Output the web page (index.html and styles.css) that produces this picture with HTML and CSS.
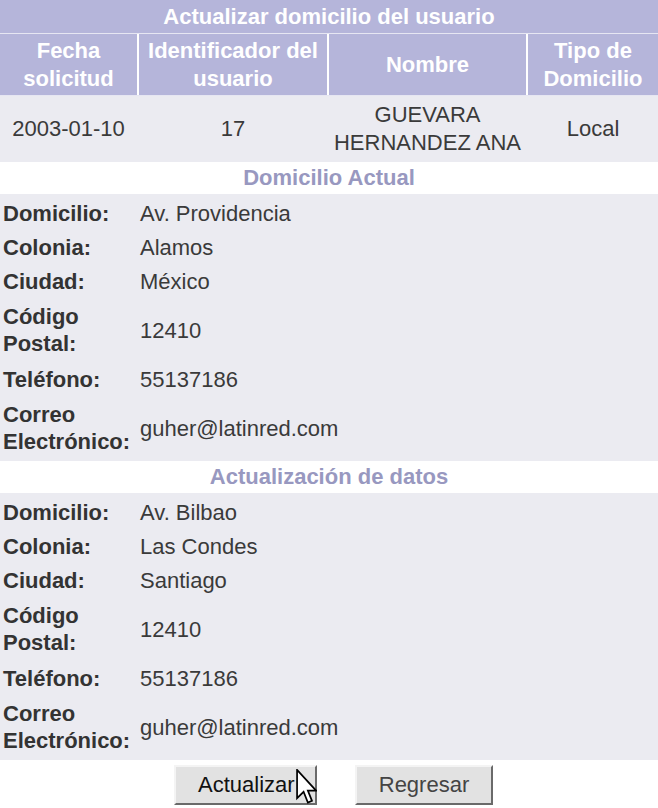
FILE: index.html
```html
<!DOCTYPE html>
<html lang="es">
<head>
    <meta charset="UTF-8">
    <meta name="viewport" content="width=device-width, initial-scale=1.0">
    <title>Actualizar domicilio del usuario</title>
    <link rel="stylesheet" href="styles.css">
</head>
<body>
    <div class="panel">
        <div class="title">Actualizar domicilio del usuario</div>
        <div class="cols head">
            <div>Fecha<br>solicitud</div>
            <div>Identificador del<br>usuario</div>
            <div>Nombre</div>
            <div>Tipo de<br>Domicilio</div>
        </div>
        <div class="cols data">
            <div>2003-01-10</div>
            <div>17</div>
            <div>GUEVARA<br>HERNANDEZ ANA</div>
            <div>Local</div>
        </div>

        <div class="section">Domicilio Actual</div>
        <div class="fields">
            <div class="field"><span class="label">Domicilio:</span><span class="value">Av. Providencia</span></div>
            <div class="field"><span class="label">Colonia:</span><span class="value">Alamos</span></div>
            <div class="field"><span class="label">Ciudad:</span><span class="value">México</span></div>
            <div class="field tall"><span class="label">Código<br>Postal:</span><span class="value">12410</span></div>
            <div class="field"><span class="label">Teléfono:</span><span class="value">55137186</span></div>
            <div class="field tall"><span class="label">Correo<br>Electrónico:</span><span class="value">guher@latinred.com</span></div>
        </div>

        <div class="section">Actualización de datos</div>
        <div class="fields">
            <div class="field"><span class="label">Domicilio:</span><span class="value">Av. Bilbao</span></div>
            <div class="field"><span class="label">Colonia:</span><span class="value">Las Condes</span></div>
            <div class="field"><span class="label">Ciudad:</span><span class="value">Santiago</span></div>
            <div class="field tall"><span class="label">Código<br>Postal:</span><span class="value">12410</span></div>
            <div class="field"><span class="label">Teléfono:</span><span class="value">55137186</span></div>
            <div class="field tall"><span class="label">Correo<br>Electrónico:</span><span class="value">guher@latinred.com</span></div>
        </div>

        <div class="actions">
            <button class="btn btn-main">Actualizar
                <svg class="cursor" width="21" height="36" viewBox="0 0 12 21">
                    <path d="M0.5 0.5 L0.5 17 L4.3 13.3 L6.8 19.6 L9.2 18.6 L6.8 12.6 L11.6 12.6 Z" fill="#fff" stroke="#000" stroke-width="1"/>
                </svg>
            </button>
            <button class="btn btn-back">Regresar</button>
        </div>
    </div>
</body>
</html>
```

FILE: styles.css
```css
body {
    margin: 0;
    background-color: #fff;
    font-family: "Liberation Sans", Arial, sans-serif;
    font-size: 22px;
    color: #3a3a3a;
}
.panel {
    width: 658px;
}
.title {
    height: 33px;
    line-height: 33px;
    background-color: #b5b5da;
    color: #fff;
    font-weight: bold;
    text-align: center;
    border-bottom: 1px solid #e6e6f2;
}
.cols {
    display: grid;
    grid-template-columns: 137px 188px 197px 130px;
    column-gap: 2px;
    text-align: center;
    line-height: 28px;
}
.cols > div {
    display: flex;
    align-items: center;
    justify-content: center;
}
.head {
    height: 61px;
    background-color: #fff;
    border-bottom: 1px solid #e6e6f2;
    color: #fff;
    font-weight: bold;
}
.head > div {
    background-color: #b5b5da;
}
.data {
    height: 66px;
    background-color: #ebebf1;
}
.data > div {
    padding-bottom: 1px;
}
.section {
    height: 32px;
    line-height: 32px;
    background-color: #fff;
    color: #9898c0;
    font-weight: bold;
    text-align: center;
}
.fields {
    background-color: #ebebf1;
    padding: 2px 0 1px;
}
.field {
    display: grid;
    grid-template-columns: 137px 1fr;
    align-items: center;
    min-height: 34px;
    line-height: 27px;
}
.field.tall {
    min-height: 64px;
}
.label {
    padding-left: 3px;
    font-weight: bold;
    color: #333;
}
.value {
    padding-left: 3px;
}
.actions {
    display: flex;
    justify-content: center;
    gap: 38px;
    padding: 5px 0 0 9px;
    height: 42px;
}
.btn {
    position: relative;
    height: 40px;
    background-color: #e2e2e2;
    border: 2px solid;
    border-color: #f4f4f4 #6a6a6a #6a6a6a #f4f4f4;
    font-family: "Liberation Sans", Arial, sans-serif;
    font-size: 22px;
    padding: 0;
}
.btn-main {
    width: 143px;
    color: #111;
    text-align: left;
    padding-left: 22px;
}
.btn-back {
    width: 138px;
    color: #444;
}
.cursor {
    position: absolute;
    left: 120px;
    top: 2px;
}
```
